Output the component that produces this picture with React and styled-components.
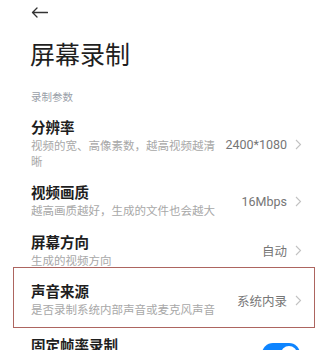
import styled, { createGlobalStyle } from "styled-components";

const GlobalStyle = createGlobalStyle`
  html, body {
    margin: 0;
    padding: 0;
    background: #ffffff;
  }
  body {
    font-family: Roboto, "Noto Sans CJK SC", sans-serif;
    -webkit-font-smoothing: antialiased;
  }
`;

const Page = styled.div`
  width: 318px;
  height: 350px;
  overflow: hidden;
  background: #ffffff;
`;

const TopBar = styled.div`
  height: 25px;
  display: flex;
  align-items: center;
  padding-left: 31px;
`;

const BackButton = styled.button`
  border: none;
  background: none;
  padding: 0;
  display: flex;
  align-items: center;
  color: #333;
`;

const PageTitle = styled.h1`
  margin: 14px 0 0;
  padding-left: 30px;
  font-size: 25px;
  line-height: 34px;
  font-weight: 400;
  color: #1f1f1f;
`;

const SectionLabel = styled.div`
  margin-top: 17px;
  padding-left: 31px;
  font-size: 10.5px;
  line-height: 16px;
  color: #9aa0a8;
`;

const List = styled.div`
  margin-top: 6px;
  display: flex;
  flex-direction: column;
`;

const Row = styled.div`
  position: relative;
  flex-shrink: 0;
  display: flex;
  align-items: center;
  padding: ${(p) => (p.$toggle ? "10px" : "6px")} 16px 7px 31px;

  &::after {
    content: "";
    display: ${(p) => (p.$highlight ? "block" : "none")};
    position: absolute;
    top: -9px;
    bottom: -2px;
    left: 13px;
    right: 3px;
    border: 1.5px solid #ad6560;
    pointer-events: none;
  }
`;

const RowText = styled.div`
  flex: 1;
  min-width: 0;
  margin-right: 8px;
`;

const RowTitle = styled.div`
  font-size: 14.5px;
  line-height: 21px;
  font-weight: 700;
  color: #1e1e1e;
`;

const RowSub = styled.div`
  font-size: 11.5px;
  line-height: 15.5px;
  color: #a8a8a8;
`;

const RowValue = styled.div`
  display: flex;
  align-items: center;
  gap: 8px;
  font-size: 12.5px;
  color: #767676;
  white-space: nowrap;
`;

const Switch = styled.div`
  width: 38px;
  height: 22px;
  margin-right: 2px;
  border-radius: 11px;
  background: ${(p) => (p.$on ? "#0d84ff" : "#d9d9d9")};
  display: flex;
  align-items: center;
  justify-content: ${(p) => (p.$on ? "flex-end" : "flex-start")};
  padding: 0 3px;
  box-sizing: border-box;
`;

const Knob = styled.div`
  width: 16px;
  height: 16px;
  border-radius: 50%;
  background: #ffffff;
`;

const Chevron = () => (
  <svg width="7" height="11" viewBox="0 0 7 11">
    <path d="M1 1 L5.5 5.5 L1 10" fill="none" stroke="#c2c2c2" strokeWidth="1.1" />
  </svg>
);

const BackArrow = () => (
  <svg width="17" height="11" viewBox="0 0 17 11">
    <path
      d="M16.5 5.5 H1.5 M6 1 L1.5 5.5 L6 10"
      fill="none"
      stroke="#333"
      strokeWidth="1.3"
      strokeLinecap="round"
      strokeLinejoin="round"
    />
  </svg>
);

const settings = [
  { title: "分辨率", sub: "视频的宽、高像素数，越高视频越清晰", value: "2400*1080" },
  { title: "视频画质", sub: "越高画质越好，生成的文件也会越大", value: "16Mbps" },
  { title: "屏幕方向", sub: "生成的视频方向", value: "自动" },
  { title: "声音来源", sub: "是否录制系统内部声音或麦克风声音", value: "系统内录", highlight: true },
  { title: "固定帧率录制", sub: "录制时保持视频帧率稳定", toggle: true, on: true },
];

export default function App() {
  return (
    <>
      <GlobalStyle />
      <Page>
        <TopBar>
          <BackButton aria-label="返回">
            <BackArrow />
          </BackButton>
        </TopBar>
        <PageTitle>屏幕录制</PageTitle>
        <SectionLabel>录制参数</SectionLabel>
        <List>
          {settings.map((s) => (
            <Row key={s.title} $highlight={s.highlight} $toggle={s.toggle}>
              <RowText>
                <RowTitle>{s.title}</RowTitle>
                <RowSub>{s.sub}</RowSub>
              </RowText>
              {s.toggle ? (
                <Switch $on={s.on}>
                  <Knob />
                </Switch>
              ) : (
                <RowValue>
                  {s.value}
                  <Chevron />
                </RowValue>
              )}
            </Row>
          ))}
        </List>
      </Page>
    </>
  );
}
